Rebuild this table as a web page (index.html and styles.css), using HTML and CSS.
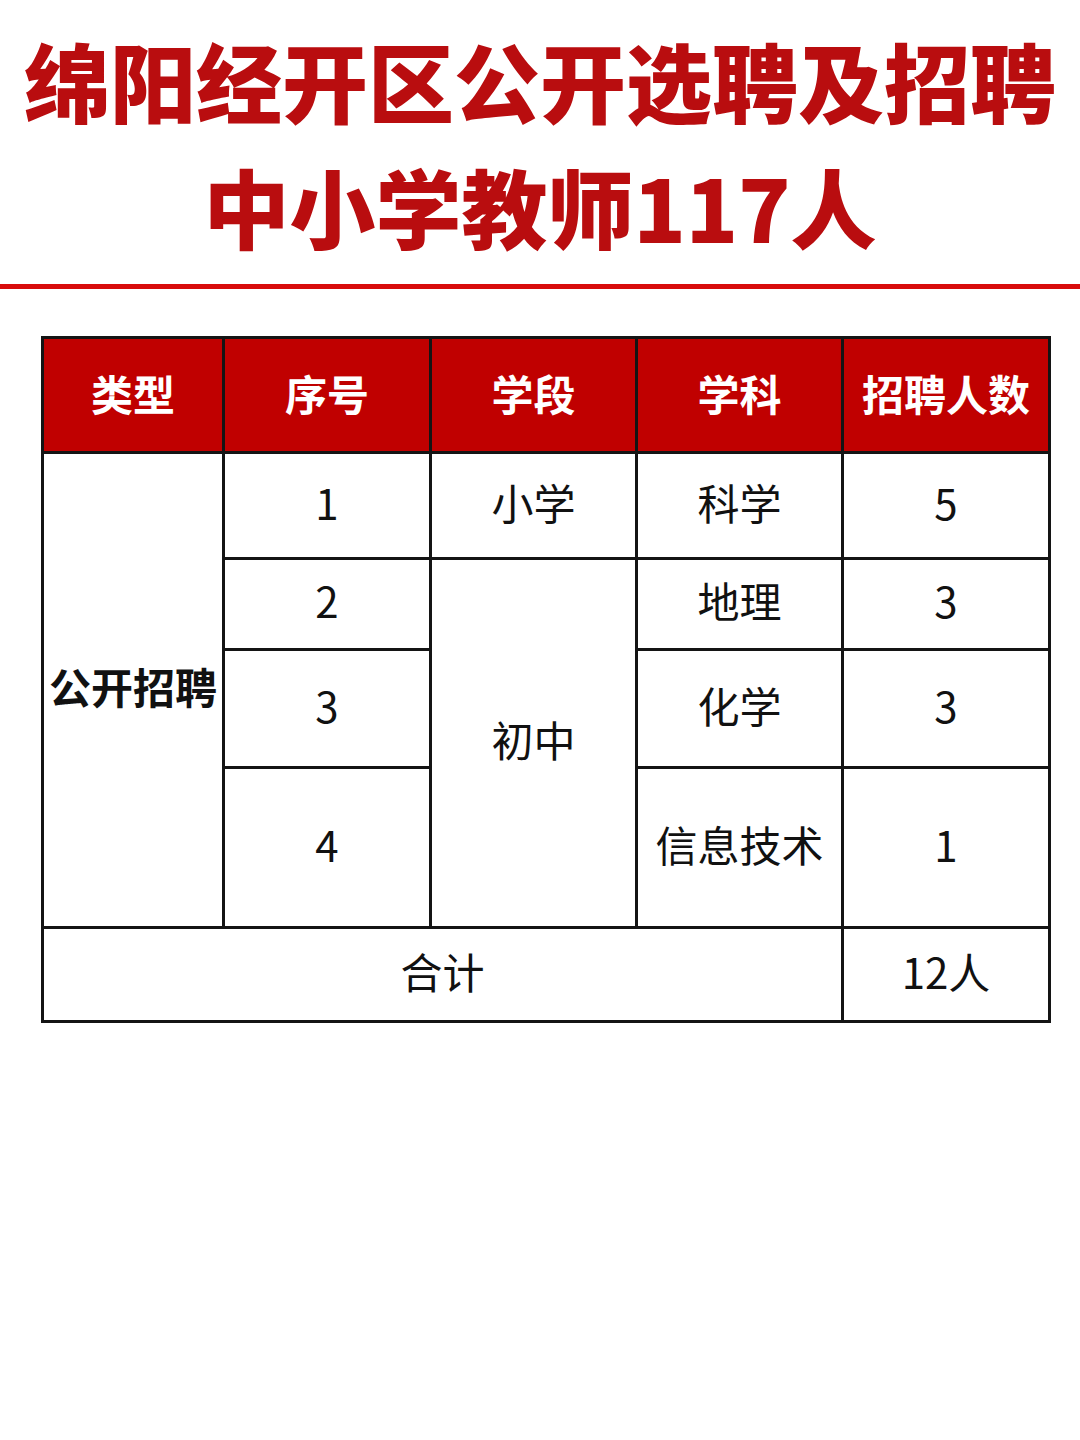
FILE: index.html
```html
<!DOCTYPE html>
<html lang="zh-CN">
<head>
<meta charset="utf-8">
<title>绵阳经开区公开选聘及招聘中小学教师117人</title>
<link rel="stylesheet" href="styles.css">
</head>
<body>
<header class="title">
  <h1 class="title-text">绵阳经开区公开选聘及招聘<br>中小学教师117人</h1>
</header>
<div class="rule"></div>
<table class="plan">
  <colgroup>
    <col class="c1"><col class="c2"><col class="c3"><col class="c4"><col class="c5">
  </colgroup>
  <thead>
    <tr class="r-head">
      <th>类型</th><th>序号</th><th>学段</th><th>学科</th><th>招聘人数</th>
    </tr>
  </thead>
  <tbody>
    <tr class="r1">
      <td rowspan="4" class="type">公开招聘</td>
      <td>1</td><td>小学</td><td>科学</td><td>5</td>
    </tr>
    <tr class="r2">
      <td>2</td><td rowspan="3">初中</td><td>地理</td><td>3</td>
    </tr>
    <tr class="r3">
      <td>3</td><td>化学</td><td>3</td>
    </tr>
    <tr class="r4">
      <td>4</td><td>信息技术</td><td>1</td>
    </tr>
    <tr class="r-total">
      <td colspan="4">合计</td><td>12人</td>
    </tr>
  </tbody>
</table>
</body>
</html>
```
FILE: styles.css
```css
html, body {
  margin: 0;
  padding: 0;
  background: #ffffff;
}
body {
  width: 1080px;
  font-family: "Noto Sans CJK SC", "Noto Sans", sans-serif;
}
.title {
  padding-top: 17px;
}
.title-text {
  margin: 0;
  text-align: center;
  color: #b90d0f;
  font-size: 86px;
  line-height: 126px;
  font-weight: 900;
  white-space: nowrap;
}
.rule {
  margin-top: 15px;
  height: 5px;
  background: #d80c0c;
}
.plan {
  margin: 47px 0 0 41px;
  width: 1007px;
  border-collapse: collapse;
  table-layout: fixed;
  font-size: 42px;
  color: #111111;
}
.c1 { width: 181px; }
.c2 { width: 207px; }
.c3 { width: 206px; }
.c4 { width: 206px; }
.c5 { width: 207px; }
.plan th, .plan td {
  border: 3px solid #141414;
  text-align: center;
  vertical-align: middle;
  padding: 0 0 7px;
  line-height: 1.2;
  white-space: nowrap;
}
.plan th {
  background: #c00000;
  color: #ffffff;
  font-weight: 700;
  padding-bottom: 4px;
}
.plan td {
  font-weight: 400;
}
.plan td.type {
  font-weight: 700;
  font-size: 42px;
}
.r-head { height: 115px; }
.r1 { height: 106px; }
.r2 { height: 91px; }
.r3 { height: 118px; }
.r4 { height: 160px; }
.r-total { height: 94px; }
```
